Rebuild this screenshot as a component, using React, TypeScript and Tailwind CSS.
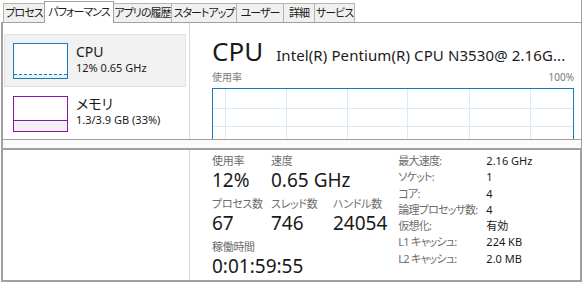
import React from "react";

const FONT = '"Noto Sans", "Noto Sans CJK JP", sans-serif';
const JP = { fontFeatureSettings: '"palt"' } as React.CSSProperties;

const tabs = [
  { t: "プロセス", w: 42 },
  { t: "パフォーマンス", w: 70, sel: true },
  { t: "アプリの履歴", w: 59 },
  { t: "スタートアップ", w: 66 },
  { t: "ユーザー", w: 48 },
  { t: "詳細", w: 32 },
  { t: "サービス", w: 41 },
];

function Tabs() {
  return (
    <div className="h-[23px] flex items-end pl-[2px] border-b border-[#a0a0a0] relative">
      {tabs.map((tab) =>
        tab.sel ? (
          <div
            key={tab.t}
            style={{ width: tab.w, ...JP }}
            className="h-[22px] -mb-px -ml-px bg-white border border-b-0 border-[#a0a0a0] flex items-center justify-center text-[11px] text-[#1a1a1a] tracking-[-1px] whitespace-nowrap relative z-10"
          >
            {tab.t}
          </div>
        ) : (
          <div
            key={tab.t}
            style={{ width: tab.w, ...JP }}
            className="h-[19px] bg-[#f0f0f0] border border-b-0 border-[#b4b4b4] -ml-px first:ml-0 flex items-center justify-center text-[11px] text-[#1a1a1a] tracking-[-1px] whitespace-nowrap"
          >
            {tab.t}
          </div>
        )
      )}
    </div>
  );
}

function CpuThumb() {
  return (
    <div className="w-[55px] h-[36px] border border-[#117dbb] bg-white flex flex-col justify-end">
      <div className="h-[4px] border-t border-dashed border-[#117dbb] bg-[#e8f2f8]" />
    </div>
  );
}

function MemThumb() {
  return (
    <div className="w-[55px] h-[36px] border border-[#8b12ae] bg-white flex flex-col justify-end">
      <div className="h-[11px] border-t border-[#8b12ae] bg-[#f1f1f1]" />
    </div>
  );
}

function Grid() {
  const vx = [13, 74, 135, 195, 257, 318];
  const hy = [20, 38];
  return (
    <svg width="362" height="51" className="block">
      <rect x="0.5" y="0.5" width="361" height="60" fill="white" stroke="#117dbb" />
      {vx.map((x) => (
        <line key={x} x1={x + 0.5} y1={1} x2={x + 0.5} y2={51} stroke="#d9eaf4" />
      ))}
      {hy.map((y) => (
        <line key={y} x1={1} y1={y + 0.5} x2={361} y2={y + 0.5} stroke="#d9eaf4" />
      ))}
    </svg>
  );
}

function Stat({ label, value }: { label: string; value: string }) {
  return (
    <div className="flex flex-col">
      <div style={JP} className="text-[11px] leading-[14px] text-[#6d6d6d] tracking-[-0.3px] whitespace-nowrap">
        {label}
      </div>
      <div className="text-[19px] leading-[22px] mt-[1px] text-[#1a1a1a] whitespace-nowrap">{value}</div>
    </div>
  );
}

const specs: [string, string][] = [
  ["最大速度:", "2.16 GHz"],
  ["ソケット:", "1"],
  ["コア:", "4"],
  ["論理プロセッサ数:", "4"],
  ["仮想化:", "有効"],
  ["L1 キャッシュ:", "224 KB"],
  ["L2 キャッシュ:", "2.0 MB"],
];

export default function App() {
  return (
    <div className="w-[583px] h-[283px] bg-white overflow-hidden" style={{ fontFamily: FONT }}>
      {/* top screenshot */}
      <div className="h-[140px] ml-[1px] mr-[1px] border-r border-[#a0a0a0] flex flex-col">
        <Tabs />
        <div className="flex-1 flex border-l-2 border-b border-[#a0a0a0] min-h-0">
          <div className="w-[187px] border-r border-[#d9d9d9] pt-[11px] pl-[1px] pr-[3px] flex flex-col">
            <div className="h-[53px] bg-[#f2f2f2] border border-[#e2e2e2] flex items-start pl-[8px] pt-[8px] gap-[8px]">
              <CpuThumb />
              <div className="flex flex-col gap-[1px]">
                <div className="text-[14px] leading-[17px] text-[#1a1a1a]">CPU</div>
                <div className="text-[11px] leading-[14px] text-[#1a1a1a]">12% 0.65 GHz</div>
              </div>
            </div>
            <div className="h-[53px] flex items-start pl-[9px] pt-[8px] gap-[8px]">
              <div className="pt-[1px]">
                <MemThumb />
              </div>
              <div className="flex flex-col gap-[1px]">
                <div style={JP} className="text-[14px] leading-[17px] text-[#1a1a1a]">メモリ</div>
                <div className="text-[11px] leading-[14px] text-[#1a1a1a]">1.3/3.9 GB (33%)</div>
              </div>
            </div>
          </div>
          <div className="flex-1 pl-[22px] pr-[5px] pt-[13px] flex flex-col min-w-0">
            <div className="flex items-baseline gap-[13px] whitespace-nowrap">
              <div className="text-[26px] leading-[30px] text-[#1a1a1a]">CPU</div>
              <div className="text-[15px] leading-[18px] text-[#1a1a1a] tracking-[0.1px]">Intel(R) Pentium(R) CPU N3530@ 2.16G...</div>
            </div>
            <div className="flex justify-between text-[10px] leading-[14px] text-[#7a7a7a] mt-[4px] pr-[2px]">
              <span style={JP}>使用率</span>
              <span>100%</span>
            </div>
            <div className="mt-[4px]">
              <Grid />
            </div>
          </div>
        </div>
      </div>

      {/* gap between screenshots */}
      <div className="h-[8px] ml-[1px] mr-[1px] border-l-2 border-r border-[#a0a0a0] bg-[#fafafa]" />

      {/* bottom screenshot */}
      <div className="h-[134px] ml-[1px] mr-[1px] border-t-2 border-b-2 border-l-2 border-r-2 border-[#a0a0a0] flex">
        <div className="w-[187px] border-r border-[#d9d9d9]" />
        <div className="flex-1 pl-[22px] pt-[4px] flex">
          <div className="flex flex-col gap-[6px]">
            <div className="flex">
              <div className="w-[59px]">
                <Stat label="使用率" value="12%" />
              </div>
              <Stat label="速度" value="0.65 GHz" />
            </div>
            <div className="flex">
              <div className="w-[59px]">
                <Stat label="プロセス数" value="67" />
              </div>
              <div className="w-[62px]">
                <Stat label="スレッド数" value="746" />
              </div>
              <Stat label="ハンドル数" value="24054" />
            </div>
            <Stat label="稼働時間" value="0:01:59:55" />
          </div>
          <div className="ml-[11px] -mt-[1px] flex flex-col">
            {specs.map(([k, v]) => (
              <div key={k} className="flex h-[16.3px] items-center text-[11px]">
                <div style={JP} className="w-[88px] text-[#6d6d6d] tracking-[-0.8px] whitespace-nowrap">{k}</div>
                <div style={JP} className="text-[#1a1a1a] whitespace-nowrap">{v}</div>
              </div>
            ))}
          </div>
        </div>
      </div>
    </div>
  );
}
